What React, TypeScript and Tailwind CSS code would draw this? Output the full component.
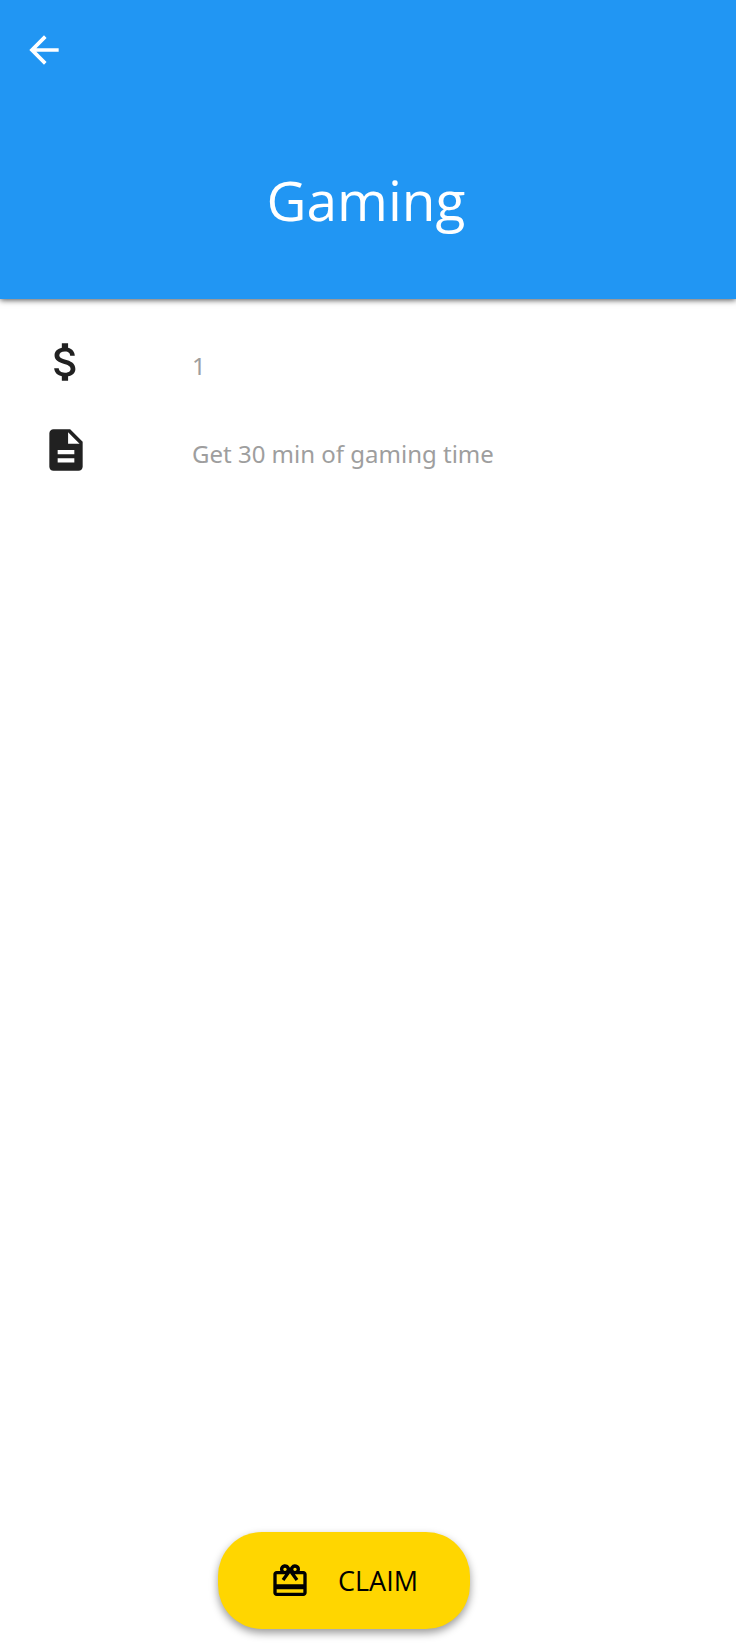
import type { ReactNode } from "react";
import { MdArrowBack, MdAttachMoney, MdDescription, MdRedeem } from "react-icons/md";

function DetailRow({ icon, children }: { icon: ReactNode; children: ReactNode }) {
  return (
    <li className="flex h-[88px] items-start gap-[101px]">
      <span className="shrink-0 text-[50px] text-[#212121]">{icon}</span>
      <span className="pt-[13px] font-['Noto_Sans','Open_Sans',sans-serif] text-2xl leading-8 text-[#9e9e9e]">{children}</span>
    </li>
  );
}

export default function App() {
  return (
    <div className="flex min-h-screen flex-col bg-white font-['Open_Sans','Noto_Sans',sans-serif]">
      <header className="flex flex-col bg-[#2196f3] px-[22px] pt-7 pb-[59px] text-white shadow-[0_1px_6px_rgba(0,0,0,0.7)]">
        <button type="button" aria-label="Back" className="self-start text-[44px]">
          <MdArrowBack />
        </button>
        <h1 className="mt-[88px] pr-1 text-center text-[55px] leading-[80px]">Gaming</h1>
      </header>
      <main className="flex flex-1 flex-col">
        <ul className="pt-[38px] pr-6 pl-[41px]">
          <DetailRow icon={<MdAttachMoney aria-label="Cost" />}>1</DetailRow>
          <DetailRow icon={<MdDescription aria-label="Description" />}>Get 30 min of gaming time</DetailRow>
        </ul>
        <div className="mt-auto flex justify-center pr-12 pb-[15px]">
          <button
            type="button"
            className="flex items-center gap-7 rounded-[44px] bg-[#ffd600] px-[52px] py-7 text-[27px] leading-[41px] text-black shadow-[0_4px_8px_rgba(0,0,0,0.4)]"
          >
            <MdRedeem className="text-[40px]" />
            CLAIM
          </button>
        </div>
      </main>
    </div>
  );
}
